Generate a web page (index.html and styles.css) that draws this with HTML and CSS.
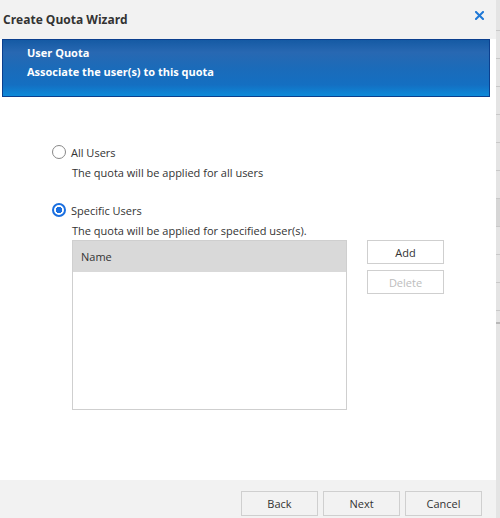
FILE: index.html
```html
<!DOCTYPE html>
<html>
<head>
<meta charset="utf-8">
<link rel="stylesheet" href="styles.css">
</head>
<body>
<div class="page">
  <div class="dialog">
    <div class="titlebar">
      <span class="title">Create Quota Wizard</span>
      <span class="close">
        <svg width="9" height="9" viewBox="0 0 9 9"><path d="M1 1L8 8M8 1L1 8" stroke="#1f78d6" stroke-width="2" stroke-linecap="square"/></svg>
      </span>
    </div>
    <div class="banner">
      <div class="banner-title">User Quota</div>
      <div class="banner-sub">Associate the user(s) to this quota</div>
    </div>
    <div class="content">
      <div class="option">
        <div class="radio-row"><span class="radio"></span><span class="label">All Users</span></div>
        <div class="desc">The quota will be applied for all users</div>
      </div>
      <div class="option second">
        <div class="radio-row"><span class="radio checked"></span><span class="label">Specific Users</span></div>
        <div class="desc">The quota will be applied for specified user(s).</div>
      </div>
      <div class="users">
        <div class="table">
          <div class="thead">Name</div>
        </div>
        <div class="side-buttons">
          <button class="btn">Add</button>
          <button class="btn disabled">Delete</button>
        </div>
      </div>
    </div>
    <div class="footer">
      <button class="btn foot">Back</button>
      <button class="btn foot">Next</button>
      <button class="btn foot">Cancel</button>
    </div>
  </div>
  <div class="strip">
    <div class="sline"></div><div class="sline"></div><div class="sline"></div><div class="sline"></div>
    <div class="sline"></div><div class="sline"></div><div class="sline dark"></div><div class="sline"></div>
    <div class="sline"></div><div class="sline"></div><div class="sline last"></div>
  </div>
</div>
</body>
</html>
```
FILE: styles.css
```css
html, body {
  margin: 0;
  padding: 0;
}
body {
  font-family: "Open Sans", "Liberation Sans", sans-serif;
  color: #333;
  font-size: 11px;
}
.page {
  display: flex;
  width: 500px;
  height: 518px;
  overflow: hidden;
}
.dialog {
  width: 496px;
  height: 518px;
  display: flex;
  flex-direction: column;
  background: #fff;
}
.titlebar {
  height: 39px;
  background: #f2f2f2;
  display: flex;
  align-items: center;
  justify-content: space-between;
  padding: 0 12px 0 3px;
  box-sizing: border-box;
}
.title {
  font-weight: bold;
  font-size: 12px;
  color: #333;
}
.close {
  display: flex;
  align-self: flex-start;
  margin-top: 11px;
}
.banner {
  margin-left: 2px;
  width: 488px;
  height: 58px;
  box-sizing: border-box;
  border: 1px solid #0b3f8e;
  background: linear-gradient(to bottom, #155aa4 0%, #2868b2 22%, #1b6bb9 50%, #146fc2 80%, #0d8ad9 100%);
  color: #fff;
  font-weight: bold;
  font-size: 11px;
  padding: 5px 0 0 24px;
}
.banner-title {
  line-height: 16px;
}
.banner-sub {
  line-height: 16px;
  margin-top: 3px;
}
.content {
  flex: 1;
  padding: 47px 0 0 52px;
}
.radio-row {
  display: flex;
  align-items: center;
  height: 16px;
}
.radio {
  width: 14px;
  height: 14px;
  box-sizing: border-box;
  border: 1.5px solid #888;
  border-radius: 50%;
  margin-right: 5px;
  background: #fff;
}
.radio.checked {
  border: 2px solid #1a6fe0;
  background: radial-gradient(circle, #1a6fe0 0 3px, #fff 3.5px);
}
.label {
  color: #333;
}
.desc {
  margin: 5px 0 0 20px;
  line-height: 16px;
}
.option.second {
  margin-top: 21px;
}
.users {
  display: flex;
  margin: 1px 0 0 20px;
}
.table {
  width: 275px;
  height: 170px;
  box-sizing: border-box;
  border: 1px solid #cfcfcf;
}
.thead {
  height: 31px;
  background: #d9d9d9;
  padding-left: 8px;
  line-height: 31px;
}
.side-buttons {
  display: flex;
  flex-direction: column;
  gap: 6px;
  margin-left: 20px;
}
.btn {
  width: 77px;
  height: 24px;
  box-sizing: border-box;
  border: 1px solid #cfcfcf;
  background: #fff;
  font-family: "Open Sans", "Liberation Sans", sans-serif;
  font-size: 11px;
  color: #333;
  padding: 0;
}
.btn.disabled {
  color: #bdbdbd;
}
.footer {
  height: 38px;
  background: #f2f2f2;
  display: flex;
  justify-content: flex-end;
  align-items: flex-end;
  gap: 5px;
  padding-right: 14px;
  box-sizing: border-box;
}
.btn.foot {
  height: 25px;
  margin-bottom: 2px;
  background: #f2f2f2;
}
.strip {
  width: 4px;
  height: 518px;
  background: #e4e4e4;
  padding-top: 30px;
  box-sizing: border-box;
}
.sline {
  height: 28px;
  border-top: 1px solid #c8c8c8;
  box-sizing: border-box;
}
.sline.dark {
  background: #d6d6d6;
}
.sline.last {
  height: 14px;
  border-bottom: 2px solid #b8b8b8;
}
```
